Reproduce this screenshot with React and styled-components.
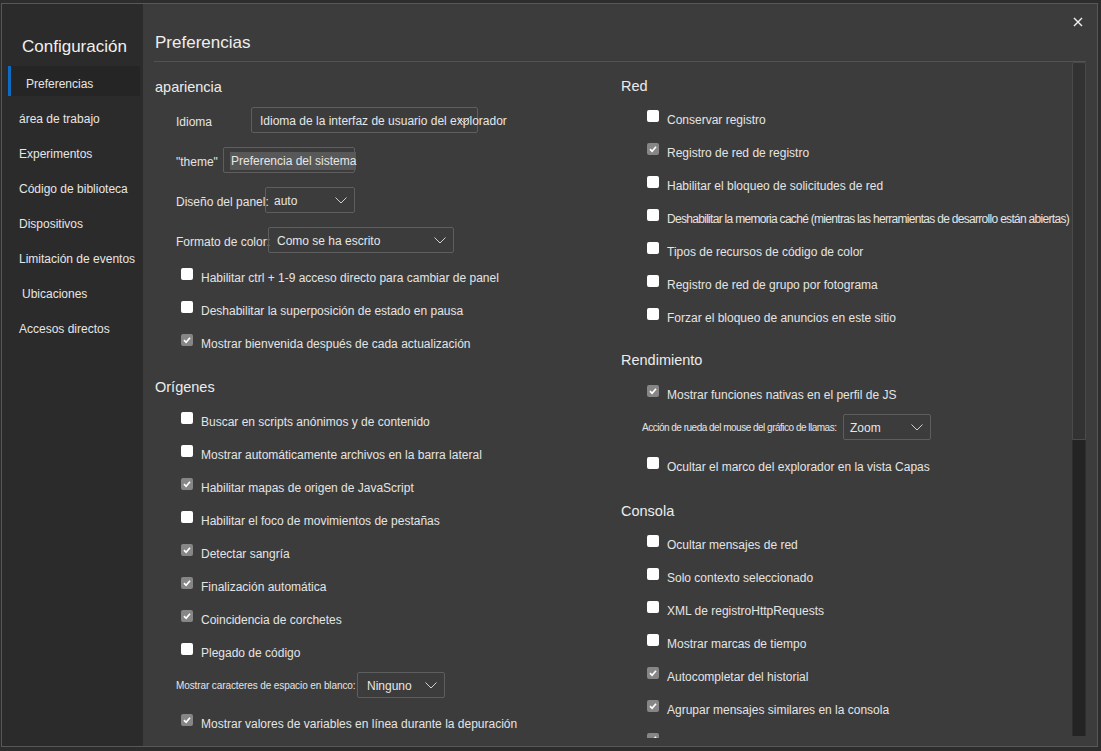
import React from "react";
import styled, { createGlobalStyle } from "styled-components";

const GlobalStyle = createGlobalStyle`
  html, body { margin: 0; padding: 0; background: #2d2d2d; }
  body { font-family: "Liberation Sans", Arial, sans-serif; color: #e2e2e2; }
  * { box-sizing: border-box; }
`;

const Frame = styled.div`
  width: 1101px;
  height: 751px;
  padding: 3px 3px 4px 1px;
  display: flex;
`;

const Dialog = styled.div`
  flex: 1;
  display: flex;
  border: 1px solid #575757;
  background: #3c3c3c;
  min-width: 0;
`;

const Sidebar = styled.nav`
  width: 141px;
  background: #2b2b2b;
  padding-top: 31px;
  display: flex;
  flex-direction: column;
`;

const SideTitle = styled.div`
  font-size: 17px;
  line-height: 24px;
  padding-left: 20px;
  color: #f0f0f0;
  margin-bottom: 7px;
`;

const NavItem = styled.div`
  height: 30px;
  margin-bottom: 5px;
  padding-top: 5px;
  display: flex;
  align-items: center;
  font-size: 12px;
  color: #e6e6e6;
  white-space: nowrap;
  padding-left: ${(p) => (p.$active ? 15 : 17 + (p.$indent || 0))}px;
  margin-left: ${(p) => (p.$active ? 6 : 0)}px;
  width: ${(p) => (p.$active ? "132px" : "auto")};
  background: ${(p) => (p.$active ? "#252525" : "transparent")};
  border-left: ${(p) => (p.$active ? "3px solid #0e6bc4" : "none")};
`;

const Main = styled.main`
  flex: 1;
  min-width: 0;
  display: flex;
  flex-direction: column;
  padding: 0 11px 8px 11px;
`;

const Header = styled.header`
  height: 58px;
  border-bottom: 1px solid #525252;
  display: flex;
  justify-content: space-between;
  align-items: flex-start;
`;

const PageTitle = styled.h1`
  margin: 0;
  padding: 27px 0 0 1px;
  font-size: 17px;
  line-height: 24px;
  font-weight: normal;
  color: #eeeeee;
`;

const CloseButton = styled.button`
  margin-top: 10px;
  width: 16px;
  height: 16px;
  padding: 0;
  border: none;
  background: transparent;
  display: flex;
  align-items: center;
  justify-content: center;
  cursor: pointer;
`;

const Body = styled.div`
  flex: 1;
  min-height: 0;
  display: flex;
`;

const Columns = styled.div`
  flex: 1;
  min-width: 0;
  overflow: hidden;
  display: grid;
  grid-template-columns: 466px 1fr;
  padding-left: 1px;
`;

const Column = styled.section`
  display: flex;
  flex-direction: column;
`;

const Heading = styled.h2`
  margin: ${(p) => p.$top}px 0 ${(p) => p.$bottom}px 0;
  padding-top: 1px;
  height: 20px;
  font-size: 14.5px;
  line-height: 20px;
  font-weight: normal;
  color: #ececec;
`;

const CheckRow = styled.label`
  height: 33px;
  flex-shrink: 0;
  display: flex;
  align-items: center;
  gap: 8px;
  padding-left: 26px;
  padding-top: 2px;
  font-size: 12px;
  letter-spacing: ${(p) => (p.$tight ? "-0.7px" : "0")};
  color: #e4e4e4;
  white-space: nowrap;
`;

const Box = styled.span`
  width: 12px;
  height: 12px;
  flex-shrink: 0;
  margin-bottom: 8px;
  border-radius: 2px;
  background: ${(p) => (p.$checked ? "#868686" : "#ffffff")};
  display: flex;
  align-items: center;
  justify-content: center;
`;

const SelectRow = styled.div`
  height: 26px;
  flex-shrink: 0;
  margin: ${(p) => p.$top || 0}px 0 ${(p) => p.$bottom || 0}px 0;
  display: flex;
  align-items: center;
  padding-left: 21px;
`;

const SelectLabel = styled.span`
  width: ${(p) => p.$w}px;
  flex-shrink: 0;
  padding-top: ${(p) => (p.$small ? 1 : 3)}px;
  white-space: nowrap;
  font-size: ${(p) => (p.$small ? "10px" : "12px")};
  letter-spacing: ${(p) => p.$ls || 0}px;
  color: #e4e4e4;
`;

const SelectBox = styled.div`
  width: ${(p) => p.$w}px;
  height: 26px;
  flex-shrink: 0;
  border: 1px solid #5e5e5e;
  border-radius: 2px;
  display: flex;
  align-items: center;
  padding-left: ${(p) => p.$pad || 8}px;
  padding-top: 2px;
  font-size: 12px;
  color: #e6e6e6;
  white-space: nowrap;
  position: relative;
`;

const Chevron = styled.svg`
  position: absolute;
  right: 7px;
  top: 9px;
`;

const Selected = styled.span`
  background: #585858;
  padding: 2px 0 2px 1px;
`;

const Scrollbar = styled.div`
  width: 14px;
  display: flex;
  flex-direction: column;
  padding-bottom: 2px;
`;

const Thumb = styled.div`
  height: 378px;
  background: #323232;
  border: 1px solid #4a4a4a;
  border-radius: 2px 2px 0 0;
`;

const Track = styled.div`
  flex: 1;
  background: #242424;
  border-left: 1px solid #2e2e2e;
  border-right: 1px solid #2e2e2e;
`;

const Check = ({ checked, tight, children }) => (
  <CheckRow $tight={tight}>
    <Box $checked={checked}>
      {checked && (
        <svg width="10" height="10" viewBox="0 0 10 10">
          <path d="M2 5.2 L4.1 7.3 L8 2.8" fill="none" stroke="#fff" strokeWidth="1.7" />
        </svg>
      )}
    </Box>
    {children}
  </CheckRow>
);

const Select = ({ label, labelW, ls, w, small, pad, top, bottom, children }) => (
  <SelectRow $top={top} $bottom={bottom}>
    <SelectLabel $w={labelW} $small={small} $ls={ls}>{label}</SelectLabel>
    <SelectBox $w={w} $pad={pad}>
      {children}
      <Chevron width="12" height="7" viewBox="0 0 12 7">
        <path d="M0.5 0.5 L6 6 L11.5 0.5" fill="none" stroke="#d0d0d0" strokeWidth="1" />
      </Chevron>
    </SelectBox>
  </SelectRow>
);

const navItems = [
  { t: "área de trabajo" },
  { t: "Experimentos" },
  { t: "Código de biblioteca" },
  { t: "Dispositivos" },
  { t: "Limitación de eventos" },
  { t: "Ubicaciones", indent: 3 },
  { t: "Accesos directos" },
];

export default function App() {
  return (
    <>
      <GlobalStyle />
      <Frame>
        <Dialog>
          <Sidebar>
            <SideTitle>Configuración</SideTitle>
            <NavItem $active>Preferencias</NavItem>
            {navItems.map((n) => (
              <NavItem key={n.t} $indent={n.indent}>{n.t}</NavItem>
            ))}
          </Sidebar>
          <Main>
            <Header>
              <PageTitle>Preferencias</PageTitle>
              <CloseButton aria-label="Cerrar">
                <svg width="10" height="10" viewBox="0 0 10 10">
                  <path d="M1 1 L9 9 M9 1 L1 9" stroke="#f2f2f2" strokeWidth="1.4" />
                </svg>
              </CloseButton>
            </Header>
            <Body>
              <Columns>
                <Column>
                  <Heading $top={14} $bottom={11}>apariencia</Heading>
                  <Select label="Idioma" labelW={75} w={227} pad={8} bottom={14}>
                    Idioma de la interfaz de usuario del explorador
                  </Select>
                  <SelectRow $bottom={14}>
                    <SelectLabel $w={47}>"theme"</SelectLabel>
                    <SelectBox $w={132} $pad={6}>
                      <Selected>Preferencia del sistema</Selected>
                    </SelectBox>
                  </SelectRow>
                  <Select label="Diseño del panel:" labelW={89} w={90} pad={8} bottom={14}>
                    auto
                  </Select>
                  <Select label="Formato de color:" labelW={92} w={186} pad={8} bottom={7}>
                    Como se ha escrito
                  </Select>
                  <Check>Habilitar ctrl + 1-9 acceso directo para cambiar de panel</Check>
                  <Check>Deshabilitar la superposición de estado en pausa</Check>
                  <Check checked>Mostrar bienvenida después de cada actualización</Check>
                  <Heading $top={17} $bottom={8}>Orígenes</Heading>
                  <Check>Buscar en scripts anónimos y de contenido</Check>
                  <Check>Mostrar automáticamente archivos en la barra lateral</Check>
                  <Check checked>Habilitar mapas de origen de JavaScript</Check>
                  <Check>Habilitar el foco de movimientos de pestañas</Check>
                  <Check checked>Detectar sangría</Check>
                  <Check checked>Finalización automática</Check>
                  <Check checked>Coincidencia de corchetes</Check>
                  <Check>Plegado de código</Check>
                  <Select label="Mostrar caracteres de espacio en blanco:" labelW={181} ls={-0.1} w={88} small pad={9} top={4} bottom={8}>
                    Ninguno
                  </Select>
                  <Check checked>Mostrar valores de variables en línea durante la depuración</Check>
                </Column>
                <Column>
                  <Heading $top={13} $bottom={7}>Red</Heading>
                  <Check>Conservar registro</Check>
                  <Check checked>Registro de red de registro</Check>
                  <Check>Habilitar el bloqueo de solicitudes de red</Check>
                  <Check tight>Deshabilitar la memoria caché (mientras las herramientas de desarrollo están abiertas)</Check>
                  <Check>Tipos de recursos de código de color</Check>
                  <Check>Registro de red de grupo por fotograma</Check>
                  <Check>Forzar el bloqueo de anuncios en este sitio</Check>
                  <Heading $top={16} $bottom={8}>Rendimiento</Heading>
                  <Check checked>Mostrar funciones nativas en el perfil de JS</Check>
                  <Select label="Acción de rueda del mouse del gráfico de llamas:" labelW={201} ls={-0.5} w={88} small pad={6} top={4} bottom={9}>
                    Zoom
                  </Select>
                  <Check>Ocultar el marco del explorador en la vista Capas</Check>
                  <Heading $top={18} $bottom={7}>Consola</Heading>
                  <Check>Ocultar mensajes de red</Check>
                  <Check>Solo contexto seleccionado</Check>
                  <Check>XML de registroHttpRequests</Check>
                  <Check>Mostrar marcas de tiempo</Check>
                  <Check checked>Autocompletar del historial</Check>
                  <Check checked>Agrupar mensajes similares en la consola</Check>
                  <Check checked>Evaluación anticipada</Check>
                </Column>
              </Columns>
              <Scrollbar>
                <Thumb />
                <Track />
              </Scrollbar>
            </Body>
          </Main>
        </Dialog>
      </Frame>
    </>
  );
}
